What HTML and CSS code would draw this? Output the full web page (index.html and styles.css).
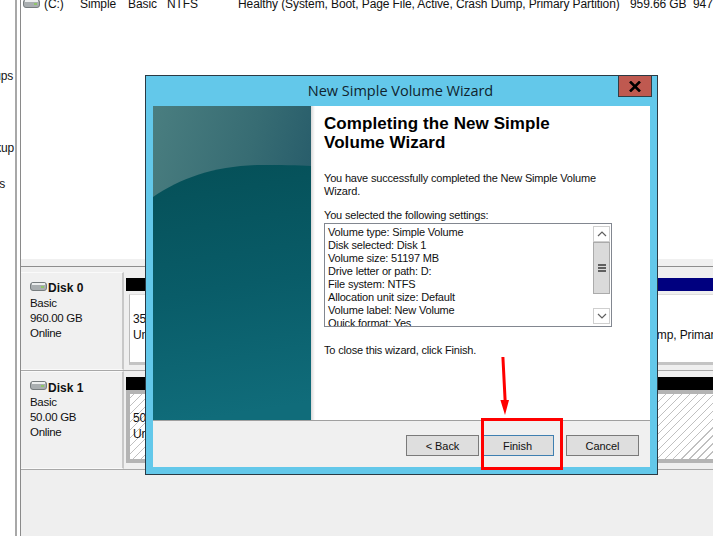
FILE: index.html
```html
<!DOCTYPE html>
<html lang="en">
<head>
  <meta charset="UTF-8" />
  <title>Disk Management - New Simple Volume Wizard</title>
  <link rel="stylesheet" href="styles.css">
</head>
<body>

<div class="desktop">
  <div class="nav">
    <span class="nav-item nav-a">Groups</span>
    <span class="nav-item nav-b">Backup</span>
    <span class="nav-item nav-c">Tools</span>
  </div>

  <div class="console">
    <div class="list">
      <div class="list-row">
        <svg class="row-icon" width="17" height="10" viewBox="0 0 17 10"><rect x="0.5" y="0.5" width="16" height="8" rx="2.5" fill="#a9aeb0" stroke="#767c7e"/><rect x="2" y="1" width="13" height="2" fill="#eceeee"/><rect x="11" y="4" width="3" height="2" fill="#8fc46a"/></svg>
        <span class="col-vol">(C:)</span>
        <span class="col-layout">Simple</span>
        <span class="col-type">Basic</span>
        <span class="col-fs">NTFS</span>
        <span class="col-status">Healthy (System, Boot, Page File, Active, Crash Dump, Primary Partition)</span>
        <span class="col-cap">959.66 GB</span>
        <span class="col-free">947.</span>
      </div>
    </div>

    <div class="graph">
      <div class="disk disk-0">
        <div class="disk-label">
          <div class="disk-name">
            <svg width="17" height="10" viewBox="0 0 17 10"><rect x="0.5" y="0.5" width="16" height="8" rx="2.5" fill="#a9aeb0" stroke="#767c7e"/><rect x="2" y="1" width="13" height="2" fill="#eceeee"/><rect x="11" y="4" width="3" height="2" fill="#8fc46a"/></svg>
            <b>Disk 0</b>
          </div>
          <div>Basic</div>
          <div>960.00 GB</div>
          <div>Online</div>
        </div>
        <div class="parts">
          <div class="part-head"><i class="head-black"></i><i class="head-blue"></i></div>
          <div class="part-body">
            <div class="part-text part-left">350 MB<br>Unallocated</div>
            <div class="part-text">(C:) 959.66 GB NTFS<br>Healthy (System, Boot, Page File, Active, Crash Dump, Primary Partition)</div>
          </div>
        </div>
      </div>

      <div class="disk disk-1">
        <div class="disk-label">
          <div class="disk-name">
            <svg width="17" height="10" viewBox="0 0 17 10"><rect x="0.5" y="0.5" width="16" height="8" rx="2.5" fill="#a9aeb0" stroke="#767c7e"/><rect x="2" y="1" width="13" height="2" fill="#eceeee"/><rect x="11" y="4" width="3" height="2" fill="#8fc46a"/></svg>
            <b>Disk 1</b>
          </div>
          <div>Basic</div>
          <div>50.00 GB</div>
          <div>Online</div>
        </div>
        <div class="parts">
          <div class="part-head"><i class="head-black head-wide"></i></div>
          <div class="part-hatch">
            <div class="part-text">50.00 GB<br>Unallocated</div>
          </div>
        </div>
      </div>
    </div>
  </div>

  <!-- wizard dialog, sits over the console -->
  <div class="wizard">
    <div class="titlebar">
      <span class="title">New Simple Volume Wizard</span>
      <div class="close">
        <svg width="14" height="11" viewBox="0 0 14 11"><path d="M2 0.5 L12 10.5 M12 0.5 L2 10.5" stroke="#000" stroke-width="2.6" fill="none"/></svg>
      </div>
    </div>
    <div class="client">
      <div class="main">
        <svg class="banner" width="158" height="314" viewBox="0 0 158 314">
          <defs>
            <linearGradient id="bannerTop" x1="0" y1="0" x2="1" y2="0.5">
              <stop offset="0" stop-color="#4a7e80"/>
              <stop offset="0.55" stop-color="#376c73"/>
              <stop offset="1" stop-color="#235868"/>
            </linearGradient>
            <linearGradient id="bannerLow" x1="0.2" y1="0" x2="0.3" y2="1">
              <stop offset="0" stop-color="#055058"/>
              <stop offset="0.5" stop-color="#095c68"/>
              <stop offset="1" stop-color="#106c7a"/>
            </linearGradient>
          </defs>
          <rect width="158" height="314" fill="url(#bannerTop)"/>
          <path d="M0 91 C28 72 62 60 106 59 C126 59 146 59 158 60 L158 314 L0 314 Z" fill="url(#bannerLow)"/>
        </svg>
        <div class="content">
          <h1>Completing the New Simple<br>Volume Wizard</h1>
          <p class="intro">You have successfully completed the New Simple Volume<br>Wizard.</p>
          <p class="selected">You selected the following settings:</p>
          <div class="settings">
            <div class="settings-text">
              Volume type: Simple Volume<br>
              Disk selected: Disk 1<br>
              Volume size: 51197 MB<br>
              Drive letter or path: D:<br>
              File system: NTFS<br>
              Allocation unit size: Default<br>
              Volume label: New Volume<br>
              Quick format: Yes
            </div>
            <div class="scrollbar">
              <div class="sb-btn">
                <svg width="10" height="6" viewBox="0 0 10 6"><path d="M1 5 L5 1 L9 5" stroke="#606060" stroke-width="1.2" fill="none"/></svg>
              </div>
              <div class="sb-thumb"><i></i><i></i><i></i></div>
              <div class="sb-track"></div>
              <div class="sb-btn">
                <svg width="10" height="6" viewBox="0 0 10 6"><path d="M1 1 L5 5 L9 1" stroke="#606060" stroke-width="1.2" fill="none"/></svg>
              </div>
            </div>
          </div>
          <p class="closing">To close this wizard, click Finish.</p>
        </div>
      </div>
      <div class="footer">
        <button class="btn">&lt; Back</button>
        <button class="btn btn-default">Finish</button>
        <button class="btn btn-cancel">Cancel</button>
      </div>
    </div>
  </div>

  <!-- annotation drawn on top of the screenshot -->
  <div class="mark"></div>
  <svg class="arrow" width="14" height="60" viewBox="0 0 14 60"><path d="M3.4 0 L6.4 0 L8.6 43 L11 43 L7 58 L2.4 43 L5.6 43 Z" fill="#f00"/></svg>
</div>

</body>
</html>
```

FILE: styles.css
```css
* {
  margin: 0;
  padding: 0;
  box-sizing: border-box;
}

html, body {
  width: 713px;
  height: 536px;
  overflow: hidden;
  background: #fff;
}

body {
  font-family: 'Liberation Sans', sans-serif;
  font-size: 11px;
  line-height: 13px;
  letter-spacing: -0.18px;
  color: #111;
}

.desktop {
  position: relative;
  display: flex;
  width: 713px;
  height: 536px;
  overflow: hidden;
}

/* left tree, cut off by the screenshot */
.nav {
  position: relative;
  width: 21px;
  flex: none;
  background: #fff;
  border-right: 1px solid #8a8a8a;
  overflow: hidden;
}

.nav::after {
  content: "";
  position: absolute;
  left: 15px;
  top: 0;
  width: 2px;
  height: 100%;
  background: #a8a8a8;
}

.nav-item {
  position: absolute;
  white-space: nowrap;
  font-size: 12px;
}

.nav-a { top: 70px; right: 7px; }
.nav-b { top: 142px; right: 6px; }
.nav-c { top: 178px; right: 15px; }

.console {
  flex: 1;
  display: flex;
  flex-direction: column;
  min-width: 0;
}

.list {
  height: 259px;
  flex: none;
  background: #fff;
  overflow: hidden;
  font-size: 12px;
  letter-spacing: -0.1px;
}

.list-row {
  position: relative;
  height: 12px;
  margin-top: -2px;
  white-space: nowrap;
}

.list-row span {
  position: absolute;
  top: 0;
}

.row-icon {
  position: absolute;
  left: 2px;
  top: 1px;
}

.col-vol { left: 23px; }
.col-layout { left: 59px; }
.col-type { left: 107px; }
.col-fs { left: 146px; }
.col-status { left: 217px; }
.col-cap { left: 609px; }
.col-free { left: 672px; }

.graph {
  flex: 1;
  background: #efefef;
  border-top: 7px solid #f0f0f0;
  box-shadow: inset 0 1px 0 #e4e4e4;
}

.disk {
  display: flex;
  height: 99px;
  border-bottom: 1px solid #a8a8a8;
}

.disk-0 {
  border-top: 1px solid #8e8e8e;
  height: 105px;
  padding-top: 5px;
}

.disk-label {
  width: 103px;
  flex: none;
  padding: 8px 0 0 9px;
  font-size: 11.5px;
  line-height: 15px;
  letter-spacing: -0.3px;
  background: #f0f0f0;
  border-right: 2px solid #c8c8c8;
  border-top: 1px solid #fafafa;
  border-bottom: 1px solid #fafafa;
}

.disk-name {
  display: flex;
  align-items: center;
  gap: 1px;
  height: 15px;
  font-size: 12px;
  letter-spacing: 0;
}

.disk-name svg {
  margin-top: -4px;
}

.disk-1 .disk-label {
  padding-top: 9px;
  line-height: 15px;
}

.disk-1 .disk-name {
  height: 14px;
}

.parts {
  flex: 1;
  min-width: 0;
  padding: 6px 0 0 2px;
  font-size: 12px;
  letter-spacing: -0.1px;
}

.part-head {
  display: flex;
  height: 13px;
}

.head-black {
  display: block;
  width: 532px;
  background: #000;
}

.head-blue {
  display: block;
  flex: 1;
  background: #00007f;
}

.head-wide {
  flex: 1;
}

.part-body {
  display: flex;
  height: 71px;
  margin: 3px 0 0 3px;
  padding-left: 3px;
  background: #fff;
  border-left: 1px solid #bbb;
  border-top: 1px solid #ddd;
  border-bottom: 3px solid #c4c4c4;
  overflow: hidden;
}

.part-left {
  width: 256px;
  flex: none;
}

.part-text {
  padding-top: 16px;
  line-height: 16px;
  white-space: nowrap;
}

.part-hatch {
  height: 73px;
  padding-left: 3px;
  border: 4px solid #b4b4b4;
  border-right: 0;
  background: repeating-linear-gradient(-45deg, #fff 0, #fff 4.8px, #c0c0c0 4.8px, #c0c0c0 5.7px);
}

/* wizard */
.wizard {
  position: absolute;
  left: 145px;
  top: 75px;
  width: 513px;
  height: 400px;
  display: flex;
  flex-direction: column;
  padding: 0 7px 7px;
  background: #63c8ea;
  border: 1px solid #2a3a44;
}

.titlebar {
  position: relative;
  height: 30px;
  flex: none;
  padding-right: 2px;
  text-align: center;
}

.title {
  font-family: 'Open Sans', sans-serif;
  font-size: 14.5px;
  letter-spacing: 0;
  line-height: 30px;
  color: #10242e;
}

.close {
  position: absolute;
  right: -2px;
  top: 0;
  width: 34px;
  height: 21px;
  display: flex;
  align-items: center;
  justify-content: center;
  background: #bf5950;
  border: 1px solid #2f3e46;
  border-top: 0;
}

.client {
  flex: 1;
  display: flex;
  flex-direction: column;
  background: #f0f0f0;
}

.main {
  flex: 1;
  display: flex;
  background: #fff;
  border-bottom: 1px solid #a0a0a0;
  min-height: 0;
}

.banner {
  flex: none;
  display: block;
}

.content {
  flex: 1;
  padding-left: 13px;
  background: linear-gradient(90deg, #d8d8d8, #fff 4px);
}

h1 {
  font-size: 17px;
  line-height: 19px;
  font-weight: bold;
  letter-spacing: 0.08px;
  color: #000;
  padding-top: 8px;
}

.intro {
  margin-top: 20px;
}

.selected {
  margin-top: 11px;
}

.settings {
  display: flex;
  width: 288px;
  height: 104px;
  margin-top: 1px;
  border: 1px solid #828790;
  background: #fff;
  overflow: hidden;
}

.settings-text {
  flex: 1;
  padding: 2px 0 0 3px;
  white-space: nowrap;
  overflow: hidden;
}

.scrollbar {
  width: 17px;
  flex: none;
  margin: 2px 1px 2px 0;
  display: flex;
  flex-direction: column;
  background: #fff;
}

.sb-btn {
  height: 16px;
  flex: none;
  display: flex;
  align-items: center;
  justify-content: center;
  border: 1px solid #cfcfcf;
}

.sb-thumb {
  height: 52px;
  flex: none;
  display: flex;
  flex-direction: column;
  align-items: center;
  justify-content: center;
  gap: 1px;
  background: #dadada;
  border: 1px solid #ababab;
}

.sb-thumb i {
  display: block;
  width: 8px;
  height: 2px;
  background: #606060;
}

.sb-track {
  flex: 1;
}

.closing {
  margin-top: 17px;
}

.footer {
  height: 46px;
  flex: none;
  display: flex;
  align-items: flex-start;
  justify-content: flex-end;
  padding: 14px 11px 0 0;
  background: #f0f0f0;
}

.btn {
  width: 73px;
  height: 21px;
  margin-left: 2px;
  font-family: 'Liberation Sans', sans-serif;
  font-size: 11px;
  letter-spacing: -0.05px;
  color: #111;
  background: #dedede;
  border: 1px solid #7a7a7a;
}

.btn-default {
  border-color: #3f7fb0;
}

.btn-cancel {
  margin-left: 12px;
}

/* red markup */
.mark {
  position: absolute;
  left: 481px;
  top: 418px;
  width: 82px;
  height: 52px;
  border: 3px solid #f00;
}

.arrow {
  position: absolute;
  left: 498px;
  top: 357px;
}
```
